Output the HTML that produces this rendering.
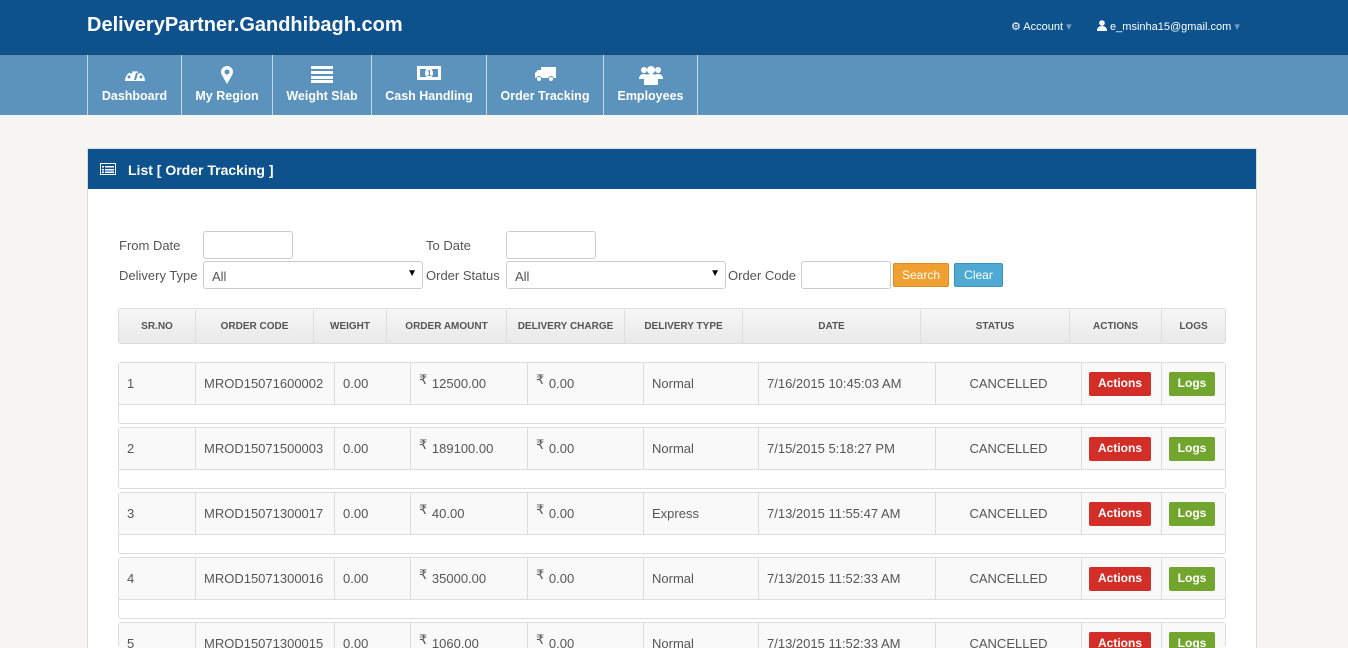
<!DOCTYPE html>
<html style="width:1348px;height:648px;overflow:hidden"><head><meta charset="utf-8"><style>
*{box-sizing:border-box;margin:0;padding:0}
body{width:1348px;height:648px;overflow:hidden;background:#f7f5f2;font-family:"Liberation Sans",sans-serif;position:relative;color:#444;font-size:13px}
.a{position:absolute}
.top{left:0;top:0;width:1348px;height:54px;background:#0d528c}
.nav{left:0;top:54px;width:1348px;height:61px;background:#5b93bd;border-top:1px solid #1a4a7a}
.ni{position:absolute;top:0;height:60px;border-left:1px solid #c4d7e6;color:#fff;font-weight:bold;font-size:12.5px;text-align:center}
.ni span{position:absolute;left:0;right:0;top:34px}
.ni svg{position:absolute;left:50%;top:10px;transform:translateX(-50%)}
.panel{left:87px;top:148px;width:1170px;height:510px;background:#fff;border:1px solid #dcdcdc}
.ph{left:88px;top:149px;width:1168px;height:40px;background:#0d528c;color:#fff;font-weight:bold;font-size:14px}
.lbl{font-size:13px;color:#555}
.inp{background:#fff;border:1px solid #ccc;border-radius:3px}
.th{left:118px;top:308px;width:1108px;height:36px;border:1px solid #ddd;border-radius:3px;background:linear-gradient(#f6f6f6,#e9e9e9)}
.th div{position:absolute;top:1px;height:34px;line-height:34px;text-align:center;font-size:10px;font-weight:bold;color:#555;border-left:1px solid #ddd}
.blk{left:118px;width:1108px;height:62px;border:1px solid #ddd;border-radius:3px;background:#fff}
.row{position:absolute;left:0;top:0;width:1106px;height:42px;background:#f9f9f9;border-bottom:1px solid #ddd}
.row div{position:absolute;top:0;height:41px;line-height:41px;font-size:13px;color:#555;border-left:1px solid #ddd;padding-left:8px}
.r{position:relative;top:-4px;font-size:13px;margin-right:1px}
.btn{position:absolute;color:#fff;font-weight:bold;font-size:12px;text-align:center;border-radius:2px;line-height:23px;height:24px}
</style></head><body>
<div class="a top"></div>
<div class="a" style="left:87px;top:14px;color:#fff;font-weight:bold;font-size:20px">DeliveryPartner.Gandhibagh.com</div>
<div class="a" style="left:1011px;top:20px;color:#fff;font-size:11px">&#9881; Account <span style="color:#7d9cbd">&#9662;</span></div>
<div class="a" style="left:1097px;top:20px;color:#fff;font-size:11px"><svg width="10" height="11" viewBox="0 0 10 11" style="vertical-align:-1px"><circle cx="5" cy="3" r="2.8" fill="#fff"/><path d="M0 11Q0 6 5 6Q10 6 10 11Z" fill="#fff"/></svg> e_msinha15@gmail.com <span style="color:#7d9cbd">&#9662;</span></div>
<div class="a nav">
<div class="ni" style="left:87px;width:94px"><svg width="22" height="18" viewBox="0 0 22 18"><path d="M1 16A10 10 0 0 1 21 16Z" fill="#fff"/><circle cx="5" cy="12" r="1.5" fill="#5b93bd"/><circle cx="7" cy="7" r="1.5" fill="#5b93bd"/><circle cx="11" cy="5" r="1.5" fill="#5b93bd"/><circle cx="15" cy="7" r="1.5" fill="#5b93bd"/><circle cx="17" cy="12" r="1.5" fill="#5b93bd"/><path d="M11 15L13 8" stroke="#5b93bd" stroke-width="2"/></svg><span>Dashboard</span></div>
<div class="ni" style="left:181px;width:91px"><svg width="14" height="20" viewBox="0 0 14 20"><path d="M7 19C3 12 1 9 1 7A6 6 0 0 1 13 7C13 9 11 12 7 19Z" fill="#fff"/><circle cx="7" cy="7" r="2.5" fill="#5b93bd"/></svg><span>My Region</span></div>
<div class="ni" style="left:272px;width:99px"><svg width="22" height="18" viewBox="0 0 22 18"><rect x="0" y="1" width="22" height="3" fill="#fff"/><rect x="0" y="6" width="22" height="3" fill="#fff"/><rect x="0" y="11" width="22" height="3" fill="#fff"/><rect x="0" y="15" width="22" height="3" fill="#fff"/></svg><span>Weight Slab</span></div>
<div class="ni" style="left:371px;width:115px"><svg width="24" height="16" viewBox="0 0 24 16"><rect x="0" y="1" width="24" height="14" fill="#fff"/><rect x="3" y="4" width="18" height="8" fill="#5b93bd"/><ellipse cx="12" cy="8" rx="4" ry="5" fill="#fff"/><text x="10" y="11" font-size="8" fill="#5b93bd" font-family="Liberation Sans">1</text></svg><span>Cash Handling</span></div>
<div class="ni" style="left:486px;width:117px"><svg width="22" height="18" viewBox="0 0 22 18"><rect x="7" y="2" width="15" height="11" fill="#fff"/><path d="M1 13V8L4 5H8V13Z" fill="#fff"/><circle cx="5" cy="14" r="2.5" fill="#fff" stroke="#5b93bd"/><circle cx="17" cy="14" r="2.5" fill="#fff" stroke="#5b93bd"/></svg><span>Order Tracking</span></div>
<div class="ni" style="left:603px;width:95px;border-right:1px solid #c4d7e6"><svg width="24" height="20" viewBox="0 0 24 20"><circle cx="5" cy="5" r="3" fill="#fff"/><circle cx="19" cy="5" r="3" fill="#fff"/><circle cx="12" cy="5" r="4" fill="#fff"/><path d="M0 14Q0 9 5 9Q10 9 10 14Z M14 14Q14 9 19 9Q24 9 24 14Z" fill="#fff"/><path d="M5 20V14Q5 9 12 9Q19 9 19 14V20Z" fill="#fff"/></svg><span>Employees</span></div>
</div>
<div class="a panel"></div>
<div class="a ph"><svg class="a" style="left:12px;top:14px" width="16" height="12" viewBox="0 0 16 12"><rect x="0.5" y="0.5" width="15" height="11" fill="none" stroke="#fff"/><rect x="2" y="3" width="2" height="1.5" fill="#fff"/><rect x="5" y="3" width="9" height="1.5" fill="#fff"/><rect x="2" y="6" width="2" height="1.5" fill="#fff"/><rect x="5" y="6" width="9" height="1.5" fill="#fff"/><rect x="2" y="8.5" width="2" height="1.5" fill="#fff"/><rect x="5" y="8.5" width="9" height="1.5" fill="#fff"/></svg><span class="a" style="left:40px;top:13px">List [ Order Tracking ]</span></div>
<div class="a lbl" style="left:119px;top:238px">From Date</div>
<div class="a inp" style="left:203px;top:231px;width:90px;height:28px"></div>
<div class="a lbl" style="left:426px;top:238px">To Date</div>
<div class="a inp" style="left:506px;top:231px;width:90px;height:28px"></div>
<div class="a lbl" style="left:119px;top:268px">Delivery Type</div>
<div class="a inp" style="left:203px;top:261px;width:220px;height:28px"><span class="a" style="left:8px;top:7px;font-size:13px;color:#555">All</span><span class="a" style="right:5px;top:6px;font-size:10px;color:#000">&#9660;</span></div>
<div class="a lbl" style="left:426px;top:268px">Order Status</div>
<div class="a inp" style="left:506px;top:261px;width:220px;height:28px"><span class="a" style="left:8px;top:7px;font-size:13px;color:#555">All</span><span class="a" style="right:5px;top:6px;font-size:10px;color:#000">&#9660;</span></div>
<div class="a lbl" style="left:728px;top:268px">Order Code</div>
<div class="a inp" style="left:801px;top:261px;width:90px;height:28px"></div>
<div class="btn" style="left:893px;top:263px;width:56px;background:#f0a030;border:1px solid #dc8d1f;font-weight:normal">Search</div>
<div class="btn" style="left:954px;top:263px;width:49px;background:#4eaad3;border:1px solid #3a93be;font-weight:normal">Clear</div>
<div class="a th">
<div style="left:0;width:76px;border:0">SR.NO</div>
<div style="left:76px;width:118px">ORDER CODE</div>
<div style="left:194px;width:73px">WEIGHT</div>
<div style="left:267px;width:120px">ORDER AMOUNT</div>
<div style="left:387px;width:118px">DELIVERY CHARGE</div>
<div style="left:505px;width:118px">DELIVERY TYPE</div>
<div style="left:623px;width:178px">DATE</div>
<div style="left:801px;width:149px">STATUS</div>
<div style="left:950px;width:92px">ACTIONS</div>
<div style="left:1042px;width:64px">LOGS</div>
</div>
<div class="a blk" style="top:362px"><div class="row"><div style="left:0;border:0">1</div><div style="left:76px">MROD15071600002</div><div style="left:215px">0.00</div><div style="left:291px"><span class="r">&#8377;</span> 12500.00</div><div style="left:408px"><span class="r">&#8377;</span> 0.00</div><div style="left:524px">Normal</div><div style="left:639px">7/16/2015 10:45:03 AM</div><div style="left:816px;width:146px;text-align:center;padding:0">CANCELLED</div><div style="left:962px;width:80px"></div><div style="left:1042px;width:64px"></div></div></div>
<div class="a blk" style="top:427px"><div class="row"><div style="left:0;border:0">2</div><div style="left:76px">MROD15071500003</div><div style="left:215px">0.00</div><div style="left:291px"><span class="r">&#8377;</span> 189100.00</div><div style="left:408px"><span class="r">&#8377;</span> 0.00</div><div style="left:524px">Normal</div><div style="left:639px">7/15/2015 5:18:27 PM</div><div style="left:816px;width:146px;text-align:center;padding:0">CANCELLED</div><div style="left:962px;width:80px"></div><div style="left:1042px;width:64px"></div></div></div>
<div class="a blk" style="top:492px"><div class="row"><div style="left:0;border:0">3</div><div style="left:76px">MROD15071300017</div><div style="left:215px">0.00</div><div style="left:291px"><span class="r">&#8377;</span> 40.00</div><div style="left:408px"><span class="r">&#8377;</span> 0.00</div><div style="left:524px">Express</div><div style="left:639px">7/13/2015 11:55:47 AM</div><div style="left:816px;width:146px;text-align:center;padding:0">CANCELLED</div><div style="left:962px;width:80px"></div><div style="left:1042px;width:64px"></div></div></div>
<div class="a blk" style="top:557px"><div class="row"><div style="left:0;border:0">4</div><div style="left:76px">MROD15071300016</div><div style="left:215px">0.00</div><div style="left:291px"><span class="r">&#8377;</span> 35000.00</div><div style="left:408px"><span class="r">&#8377;</span> 0.00</div><div style="left:524px">Normal</div><div style="left:639px">7/13/2015 11:52:33 AM</div><div style="left:816px;width:146px;text-align:center;padding:0">CANCELLED</div><div style="left:962px;width:80px"></div><div style="left:1042px;width:64px"></div></div></div>
<div class="a blk" style="top:622px;height:26px;border-bottom:0"><div class="row"><div style="left:0;border:0">5</div><div style="left:76px">MROD15071300015</div><div style="left:215px">0.00</div><div style="left:291px"><span class="r">&#8377;</span> 1060.00</div><div style="left:408px"><span class="r">&#8377;</span> 0.00</div><div style="left:524px">Normal</div><div style="left:639px">7/13/2015 11:52:33 AM</div><div style="left:816px;width:146px;text-align:center;padding:0">CANCELLED</div><div style="left:962px;width:80px"></div><div style="left:1042px;width:64px"></div></div></div>
<div class="btn" style="left:1089px;top:372px;width:62px;background:#d22d27">Actions</div><div class="btn" style="left:1169px;top:372px;width:46px;background:#72a52e">Logs</div>
<div class="btn" style="left:1089px;top:437px;width:62px;background:#d22d27">Actions</div><div class="btn" style="left:1169px;top:437px;width:46px;background:#72a52e">Logs</div>
<div class="btn" style="left:1089px;top:502px;width:62px;background:#d22d27">Actions</div><div class="btn" style="left:1169px;top:502px;width:46px;background:#72a52e">Logs</div>
<div class="btn" style="left:1089px;top:567px;width:62px;background:#d22d27">Actions</div><div class="btn" style="left:1169px;top:567px;width:46px;background:#72a52e">Logs</div>
<div class="btn" style="left:1089px;top:632px;width:62px;background:#d22d27">Actions</div><div class="btn" style="left:1169px;top:632px;width:46px;background:#72a52e">Logs</div>
</body></html>
